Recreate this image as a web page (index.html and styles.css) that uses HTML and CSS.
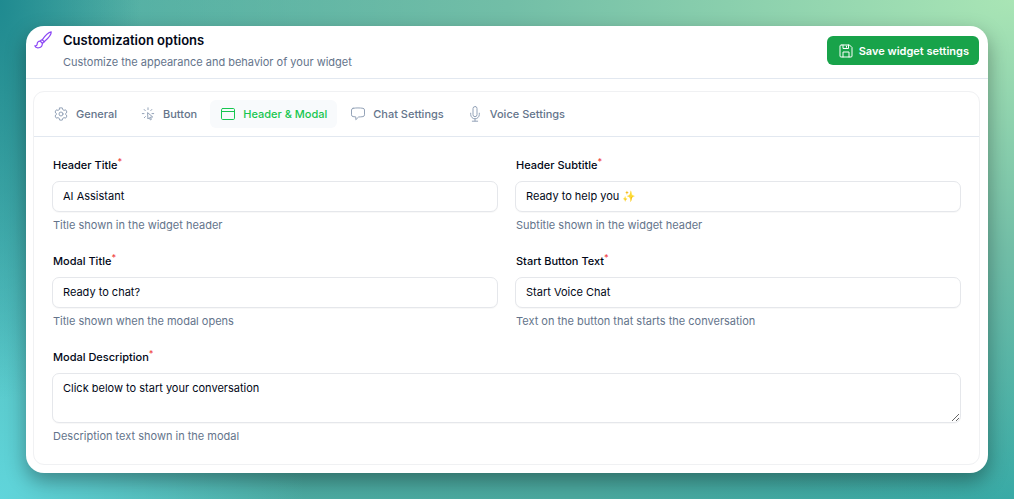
FILE: index.html
```html
<!DOCTYPE html>
<html lang="en">
<head>
<meta charset="utf-8">
<meta name="viewport" content="width=device-width, initial-scale=1">
<title>Customization options</title>
<link rel="stylesheet" href="styles.css">
</head>
<body class="page">
<main class="card">
  <header class="card-header">
    <svg class="icon icon-brush" viewBox="0 0 18 18" aria-hidden="true">
      <path d="M17.2 .8C14.500 1.200 10.600 5.200 8.200 8.800L10.200 10.700C13.700 7.800 17.500 3.400 17.200 .8Z"/>
      <path d="M8.200 8.800C7.300 8.700 6.600 9.400 6.300 10.200L8.400 12.200C9.300 12 10.100 11.500 10.200 10.700"/>
      <path d="M6.300 10.200C4.400 10 3.200 11.200 3.200 12.800C3.200 14.300 2.200 15 .8 14.900C1.800 17.700 8.400 18 8.400 12.200"/>
    </svg>
    <div class="heading">
      <h1 class="title">Customization options</h1>
      <p class="subtitle">Customize the appearance and behavior of your widget</p>
    </div>
    <button class="save" type="submit" form="widget-form">
      <svg class="icon icon-save" viewBox="0 0 14 14" aria-hidden="true">
        <path d="M2.500 1H10.500L13 3.500V12A1 1 0 0 1 12 13H2A1 1 0 0 1 1 12V2A1 1 0 0 1 2 1Z"/>
        <path d="M4 1V4.500H9.500V1M4 13V8H10V13M7.500 2.200V3.200"/>
      </svg>
      Save widget settings
    </button>
  </header>
  <section class="panel">
    <nav class="tabs" aria-label="Widget settings">
      <button class="tab" type="button">
        <svg class="icon icon-tab" viewBox="0 0 14 14" aria-hidden="true">
          <path d="M5.700 .9H8.300L8.700 2.600L10 3.350L11.700 2.850L13 5.100L11.750 6.250V7.750L13 8.900L11.700 11.150L10 10.650L8.700 11.400L8.300 13.100H5.700L5.300 11.400L4 10.650L2.300 11.150L1 8.900L2.250 7.750V6.250L1 5.100L2.300 2.850L4 3.350L5.300 2.600Z"/>
          <circle cx="7" cy="7" r="2"/>
        </svg>
        General
      </button>
      <button class="tab" type="button">
        <svg class="icon icon-tab" viewBox="0 0 14 14" aria-hidden="true">
          <path d="M7 .8V2.600M3.200 2.500L4.300 3.700M10.800 2.500L9.800 3.600M1.300 6.600H3M11 6.600H12.700M3.300 10.700L4.400 9.600M6.600 6L6.900 12L8.300 10.600L9.300 12.900L10.400 12.400L9.400 10.200L11.300 10Z"/>
        </svg>
        Button
      </button>
      <button class="tab tab-active" type="button" aria-current="page">
        <svg class="icon icon-tab" viewBox="0 0 14 14" aria-hidden="true">
          <rect x=".5" y="1.500" width="13" height="11" rx="1.200"/>
          <path d="M.5 4.500H13.500"/>
        </svg>
        Header &amp; Modal
      </button>
      <button class="tab" type="button">
        <svg class="icon icon-tab" viewBox="0 0 14 14" aria-hidden="true">
          <path d="M2 1.300C5 .8 9 .8 12 1.300Q13.400 1.500 13.500 3V7.800Q13.400 9.400 12 9.600Q9.800 9.900 7.600 10L4.800 12.700V9.900L2 9.600Q.6 9.400 .5 7.800V3Q.6 1.500 2 1.300Z"/>
        </svg>
        Chat Settings
      </button>
      <button class="tab" type="button">
        <svg class="icon icon-tab" viewBox="0 0 14 14" aria-hidden="true">
          <rect x="5" y="-.5" width="4" height="10.200" rx="2"/>
          <path d="M2.700 6.200V7.500A4.300 4.300 0 0 0 11.300 7.500V6.200M7 11.800V14M4.300 14.200H9.700"/>
        </svg>
        Voice Settings
      </button>
    </nav>
    <form class="form" id="widget-form">
      <div class="field">
        <label class="label" for="header-title">Header Title<span class="required">*</span></label>
        <input class="control" id="header-title" type="text" value="AI Assistant">
        <p class="help">Title shown in the widget header</p>
      </div>
      <div class="field">
        <label class="label" for="header-subtitle">Header Subtitle<span class="required">*</span></label>
        <input class="control" id="header-subtitle" type="text" value="Ready to help you ✨">
        <p class="help">Subtitle shown in the widget header</p>
      </div>
      <div class="field">
        <label class="label" for="modal-title">Modal Title<span class="required">*</span></label>
        <input class="control" id="modal-title" type="text" value="Ready to chat?">
        <p class="help">Title shown when the modal opens</p>
      </div>
      <div class="field">
        <label class="label" for="start-text">Start Button Text<span class="required">*</span></label>
        <input class="control" id="start-text" type="text" value="Start Voice Chat">
        <p class="help">Text on the button that starts the conversation</p>
      </div>
      <div class="field field-wide">
        <label class="label" for="modal-description">Modal Description<span class="required">*</span></label>
        <textarea class="control control-area" id="modal-description" rows="2">Click below to start your conversation</textarea>
        <p class="help">Description text shown in the modal</p>
      </div>
    </form>
  </section>
</main>
</body>
</html>
```
FILE: styles.css
```css
*,
*::before,
*::after {
  box-sizing: border-box;
}

.page {
  margin: 0;
  min-height: 100vh;
  padding: 26px;
  font-family: Inter, "Liberation Sans", sans-serif;
  font-size: 11px;
  line-height: 16px;
  color: #020817;
  background:
    radial-gradient(ellipse 140px 400px at 0 0, #1f8a90 0, #1f8a9000 100%),
    radial-gradient(ellipse 30% 90% at 0 100%, #60d5db 0, #4bb0b000 100%),
    radial-gradient(ellipse 100% 100% at 100% 0, #a9e5b5 0, #72bea7 50%, #5fb2a400 100%),
    linear-gradient(100deg, #4cada5 0, #4ba99f 60%, #38aaa6 100%);
}

.card {
  padding-bottom: 8px;
  border-radius: 18px;
  background: #fff;
  box-shadow: 0 8px 20px #00000059;
}

.card-header {
  display: flex;
  align-items: flex-start;
  gap: 11px;
  padding: 5px 9px 4px 8px;
  border-bottom: 1px solid #e2e8f0;
}

.icon {
  flex: none;
  fill: none;
  stroke: currentColor;
  stroke-width: 1;
  stroke-linecap: round;
  stroke-linejoin: round;
  overflow: visible;
}

.icon-brush {
  width: 18px;
  height: 18px;
  color: #8b47f5;
  stroke-width: 1.2;
}

.icon-save,
.icon-tab {
  width: 14px;
  height: 14px;
}

.heading {
  flex: 1;
}

.title {
  margin: 0;
  font-size: 13px;
  line-height: 19px;
  font-weight: 600;
}

.subtitle {
  margin: 0;
  line-height: 24px;
  color: #64748b;
}

.save {
  display: flex;
  align-items: center;
  gap: 6px;
  margin-top: 5px;
  padding: 7px 10px 6px 12px;
  border: 0;
  border-radius: 6px;
  font: inherit;
  font-weight: 600;
  color: #fff;
  background: #18a34a;
}

.panel {
  margin: 12px 8px 0 7px;
  border: 1px solid #f0f1f3;
  border-radius: 11px;
  background: #fff;
}

.tabs {
  display: flex;
  gap: 3px;
  padding: 8px 9px;
  border-bottom: 1px solid #e2e8f0;
}

.tab {
  display: flex;
  align-items: center;
  gap: 8px;
  padding: 6px 10px 6px 11px;
  border: 0;
  border-radius: 6px;
  font: inherit;
  font-weight: 500;
  color: #64748b;
  background: none;
}

.tab .icon {
  color: #94a3b8;
}

.tab-active {
  color: #16c64f;
  background: #f8fafc;
}

.tab-active .icon {
  color: #16c64f;
}

.form {
  display: grid;
  grid-template-columns: 1fr 1fr;
  gap: 20px 17px;
  padding: 20px 18px;
}

.field {
  display: flex;
  flex-direction: column;
  min-width: 0;
}

.field-wide {
  grid-column: 1 / -1;
}

.label {
  padding-left: 1px;
  margin-bottom: 8px;
  font-weight: 500;
}

.required {
  font-size: 9px;
  line-height: 10px;
  vertical-align: top;
  color: #ef4444;
}

.control {
  width: 100%;
  height: 31px;
  padding: 5px 10px 7px;
  border: 1px solid #e5e7eb;
  border-radius: 7px;
  outline: 0;
  font: inherit;
  color: inherit;
  background: #fff;
  box-shadow: 0 1px 1px #00000008;
}

.control-area {
  display: block;
  height: 50px;
  padding-top: 6px;
  resize: vertical;
}

.help {
  margin: 5px 0 0;
  padding-left: 1px;
  color: #64748b;
}
```
